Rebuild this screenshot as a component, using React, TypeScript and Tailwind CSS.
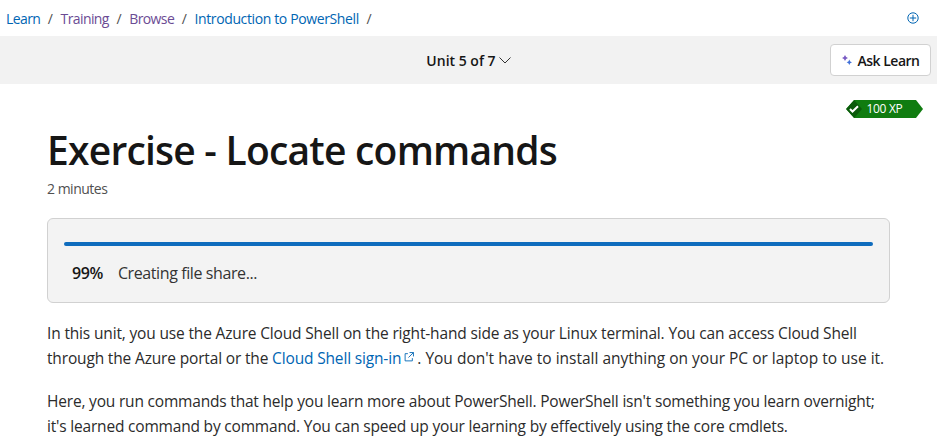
const font = "font-['Open_Sans',sans-serif]";

function Crumb({ label, visited, tight }: { label: string; visited?: boolean; tight?: boolean }) {
  return (
    <>
      <a className={`${visited ? 'text-[#6b4b94]' : 'text-[#0065b3]'} ${tight ? 'tracking-[-0.6px]' : 'tracking-[-0.38px]'}`}>{label}</a>
      <span className="text-[#505050]">/</span>
    </>
  );
}

export default function App() {
  return (
    <div className={`h-[444px] w-[937px] overflow-hidden bg-white text-[#161616] ${font}`}>
      {/* Breadcrumbs */}
      <div className="flex h-9 items-center justify-between pl-[6px] pr-[18px]">
        <div className="flex items-center gap-[7.6px] text-[14px]">
          <Crumb label="Learn" tight />
          <Crumb label="Training" visited tight />
          <Crumb label="Browse" visited tight />
          <Crumb label="Introduction to PowerShell" />
        </div>
        <svg width="12" height="12" viewBox="0 0 12 12" fill="none" stroke="#0065b3" strokeWidth="1">
          <circle cx="6" cy="6" r="5.2" />
          <path d="M6 2.8v6.4M2.8 6h6.4" />
        </svg>
      </div>

      {/* Unit bar */}
      <div className="relative flex h-12 items-center justify-center bg-[#f2f2f2]">
        <div className="flex items-center gap-[3px] text-[14px] font-semibold">
          Unit 5 of 7
          <svg width="12" height="7" viewBox="0 0 12 7" fill="none" stroke="#333" strokeWidth="1">
            <path d="M0.5 0.5L6 6l5.500-5.500" />
          </svg>
        </div>
        <button className="absolute right-[6px] top-2 flex h-8 w-[101px] items-center justify-center gap-[6px] rounded border border-[#d1d1d1] bg-white text-[14px] font-semibold tracking-[-0.5px]">
          <svg width="10" height="10" viewBox="0 0 10 10">
            <path d="M3 0L4.100 1.900 6 3 4.100 4.100 3 6 1.900 4.100 0 3 1.900 1.900z" fill="#7a5cc4" />
            <path d="M7.300 4.600L8.200 6.400 10 7.300 8.200 8.200 7.300 10 6.400 8.200 4.600 7.300 6.400 6.400z" fill="#3f6fd8" />
          </svg>
          Ask Learn
        </button>
      </div>

      {/* Content */}
      <main className="relative px-[47px]">
        <div className="absolute right-[14px] top-[16px] flex h-[18px] w-[77px] items-center justify-center bg-[#107c10] text-[12px] font-medium tracking-[-0.3px] text-white [clip-path:polygon(8px_0,70px_0,100%_50%,70px_100%,8px_100%,0_50%)]">
          <span className="absolute left-0 top-0 flex h-full w-[16px] items-center justify-center bg-[#0b5a0b] [clip-path:polygon(8px_0,100%_50%,8px_100%,0_50%)]">
            <svg width="10" height="8" viewBox="0 0 10 8" fill="none" stroke="white" strokeWidth="2">
              <path d="M1 4l2.500 2.500L9 1.200" />
            </svg>
          </span>
          100 XP
        </div>

        <h1 className="pt-[37px] text-[39px] font-semibold leading-[58px] tracking-[-0.78px]">Exercise - Locate commands</h1>
        <p className="mt-px text-[14px] leading-[18px] tracking-[-0.5px] text-[#505050]">2 minutes</p>

        <div className="mt-5 h-[85px] w-[843px] rounded-md border border-[#d1d1d1] bg-[#f3f3f3] px-4 pt-[23px]">
          <div className="h-1 rounded-full bg-[#0f6cbd]" />
          <div className="mt-[17px] flex items-center gap-[15px] pl-2 text-[16px] leading-[20px] tracking-[-0.4px]">
            <span className="font-semibold">99%</span>
            <span className="text-[#333]">Creating file share...</span>
          </div>
        </div>

        <p className="mt-[18px] whitespace-nowrap text-[15.5px] leading-[25px] tracking-[-0.16px] text-[#2b2b2b]">
          In this unit, you use the Azure Cloud Shell on the right-hand side as your Linux terminal. You can access Cloud Shell
          <br />
          through the Azure portal or the{' '}
          <a className="text-[#0065b3]">Cloud Shell sign-in</a>
          <svg className="mb-[6px] ml-[3px] mr-[3px] inline" width="10" height="10" viewBox="0 0 9 9" fill="none" stroke="#0065b3" strokeWidth="0.8">
            <path d="M3.500 1.500H1v6.500h6.500V5.500M5 0.500h3.500V4M8.500 0.500L4 5" />
          </svg>
          <span className="tracking-[0px]">. You don't have to install anything on your PC or laptop to use it.</span>
        </p>
        <p className="mt-[18px] whitespace-nowrap text-[15.5px] leading-[25px] tracking-[-0.19px] text-[#2b2b2b]">
          Here, you run commands that help you learn more about PowerShell. PowerShell isn't something you learn overnight;
          <br />
          it's learned command by command. You can speed up your learning by effectively using the core cmdlets.
        </p>
      </main>
    </div>
  );
}
